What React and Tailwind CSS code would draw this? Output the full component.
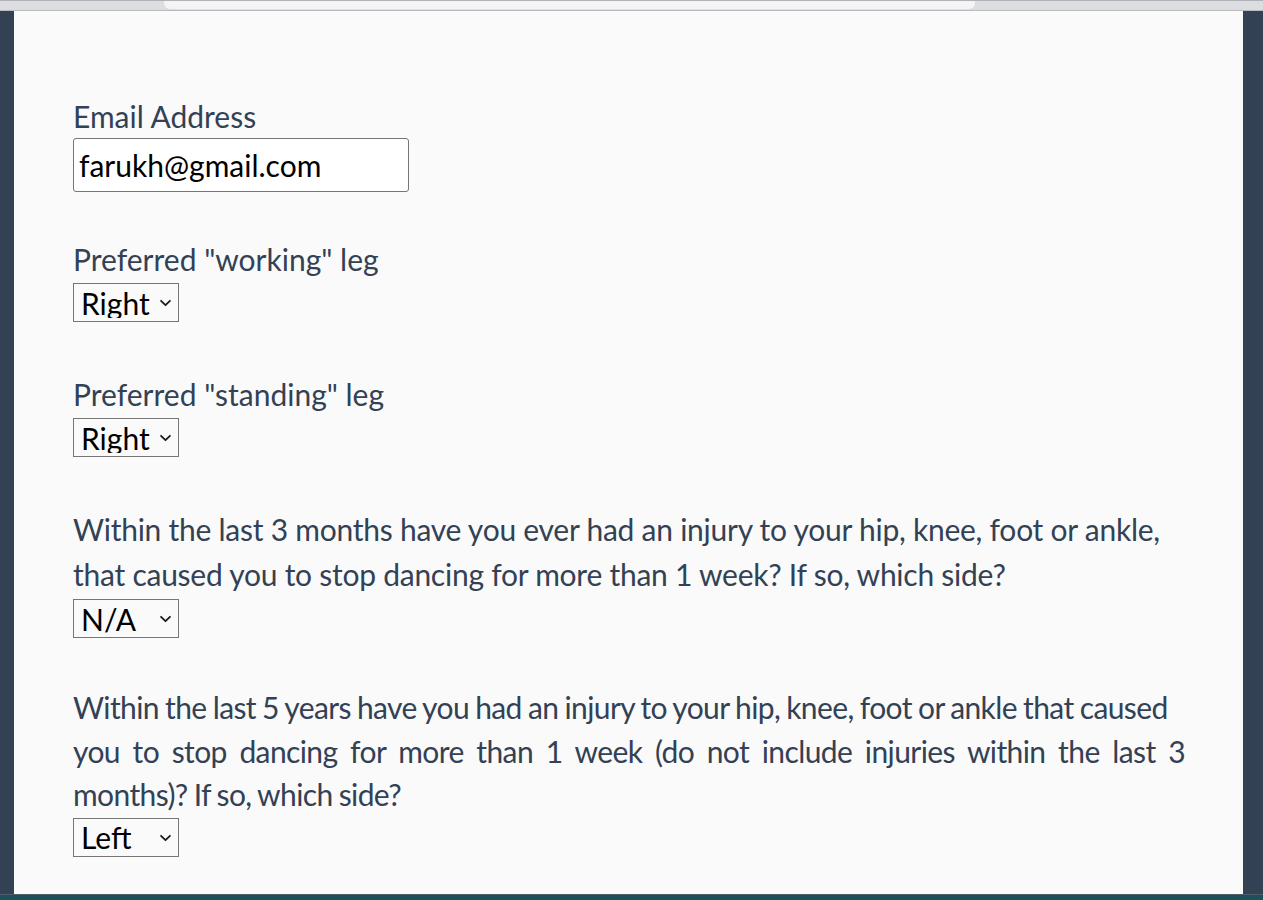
import { useState } from "react";

// ── Chevron for the native-looking selects ─────────────
const Chevron = () => (
    <svg viewBox="0 0 14 9" fill="none" stroke="currentColor" strokeWidth="2" strokeLinecap="round" strokeLinejoin="round" className="w-[13px] h-[8px]">
        <polyline points="2 2 7 7 12 2" />
    </svg>
);

const Select = ({ value, options, onChange }) => (
    <div className="relative w-[106px] h-[39px] border border-[#767676] bg-[#fafafa]">
        <select
            value={value}
            onChange={(e) => onChange(e.target.value)}
            className="appearance-none block w-full h-full pl-[7px] pr-6 py-0 bg-transparent text-black text-[30px] leading-[30px] outline-none"
            style={{ fontFamily: "Lato, 'Noto Sans', sans-serif" }}
        >
            {options.map((o) => (
                <option key={o}>{o}</option>
            ))}
        </select>
        <span className="pointer-events-none absolute right-[6px] top-[15px] flex text-[#1a1a1a]">
            <Chevron />
        </span>
    </div>
);

const SIDES = ["Right", "Left", "Both", "N/A"];

export default function App() {
    const [email, setEmail] = useState("farukh@gmail.com");
    const [working, setWorking] = useState("Right");
    const [standing, setStanding] = useState("Right");
    const [recent, setRecent] = useState("N/A");
    const [past, setPast] = useState("Left");

    return (
        <div className="h-[900px] flex flex-col overflow-hidden bg-[#334155]" style={{ fontFamily: "Lato, 'Noto Sans', sans-serif" }}>
            {/* ── Browser chrome strip ───────────────────── */}
            <div className="h-[11px] flex-shrink-0 bg-[#dcdde1] border-t border-[#b0b1b5] border-b border-b-[#b9babe] pl-[164px]">
                <div className="w-[811px] h-[8px] bg-[#f4f4f6] rounded-b-[6px]" />
            </div>

            {/* ── Page ───────────────────────────────────── */}
            <div className="flex-1 flex min-h-0">
                <div className="w-[14px] flex-shrink-0 bg-[#334155]" />
                <div className="flex-1 min-w-0 bg-[#fafafa] pt-[83px] pl-[59px] pr-[58px] text-[#334155] text-[30px] leading-[44px]">
                    <label className="block">Email Address</label>
                    <input
                        value={email}
                        onChange={(e) => setEmail(e.target.value)}
                        className="block w-[336px] h-[54px] px-[5px] bg-white border border-[#767676] rounded-[3px] text-black text-[30px] outline-none"
                    />

                    <label className="block mt-[45px]">Preferred "working" leg</label>
                    <div className="mt-[2px]">
                        <Select value={working} options={SIDES} onChange={setWorking} />
                    </div>

                    <label className="block mt-[50px]">Preferred "standing" leg</label>
                    <div className="mt-[2px]">
                        <Select value={standing} options={SIDES} onChange={setStanding} />
                    </div>

                    <p className="mt-[50px] tracking-[-0.25px] leading-[45px]">
                        Within the last 3 months have you ever had an injury to your hip, knee, foot or ankle, that caused you to stop dancing for more than 1 week? If so, which side?
                    </p>
                    <div className="mt-[2px]">
                        <Select value={recent} options={SIDES} onChange={setRecent} />
                    </div>

                    <p className="mt-[48px] text-justify tracking-[-0.6px] [word-spacing:-1px] leading-[43.5px]">
                        <span className="whitespace-nowrap">Within the last 5 years have you had an injury to your hip, knee, foot or ankle that caused</span>
                        <br />
                        you to stop dancing for more than 1 week (do not include injuries within the last 3 months)? If so, which side?
                    </p>
                    <div className="mt-[1px]">
                        <Select value={past} options={SIDES} onChange={setPast} />
                    </div>
                </div>
                <div className="w-[20px] flex-shrink-0 bg-[#334155]" />
            </div>

            {/* ── Bottom strip ───────────────────────────── */}
            <div className="h-[6px] flex-shrink-0 bg-[#1f4f5a] border-t border-[#4b6068]" />
        </div>
    );
}
